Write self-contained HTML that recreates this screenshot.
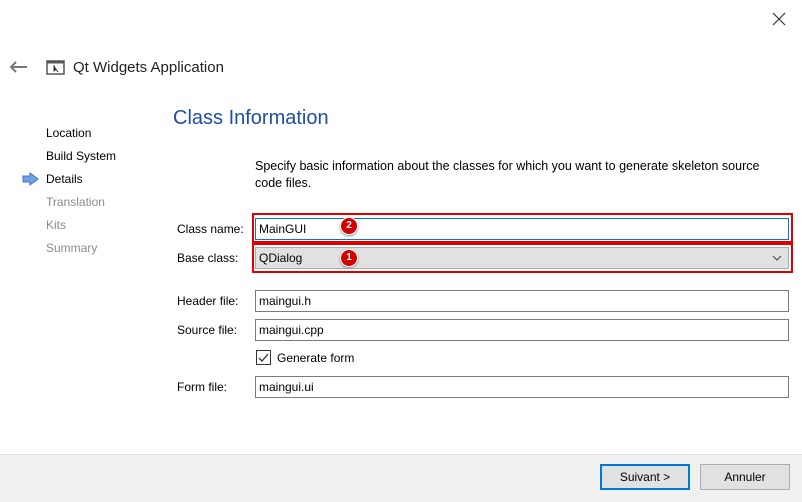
<!DOCTYPE html>
<html><head><style>
body{margin:0;width:802px;height:501px;background:#fff;position:relative;overflow:hidden;font-family:"Liberation Sans",sans-serif;font-size:12px;color:#000}
.a{position:absolute;white-space:nowrap}
.side{left:46px;font-size:12px}
.g{color:#8c8c8c}
.lbl{left:177px}
.inp{position:absolute;left:255px;width:532px;height:20px;border:1px solid #7a7a7a;background:#fff;box-sizing:content-box}
.inp span{position:absolute;left:3px;top:3px}
.red{position:absolute;border:2px solid #e00000}
.badge{position:absolute;width:16px;height:16px;border-radius:50%;background:#d40000;border:1px solid #fff;box-shadow:0 1px 2px #888;color:#fff;font-weight:bold;font-size:10px;text-align:center;line-height:16px}
.btn{position:absolute;top:464px;width:88px;height:24px;border:1px solid #adadad;background:#e1e1e1;text-align:center;line-height:24px}
</style></head><body>
<svg class="a" style="left:772px;top:12px" width="14" height="14"><path d="M1 1L13 13M13 1L1 13" stroke="#333" stroke-width="1.2"/></svg>
<svg class="a" style="left:10px;top:61px" width="18" height="12"><path d="M1 6H17M6 1L1 6L6 11" stroke="#777" stroke-width="2" fill="none"/></svg>
<svg class="a" style="left:46px;top:60px" width="19" height="16"><rect x="1" y="1" width="17" height="13" fill="#fff" stroke="#555" stroke-width="1.5"/><rect x="1" y="1" width="17" height="2.5" fill="#555"/><path d="M8 5L8 11L10 9.5L12 12" stroke="#333" fill="#333"/></svg>
<div class="a" style="left:73px;top:59px;font-size:15px;color:#222">Qt Widgets Application</div>
<div class="a" style="left:173px;top:107px;font-size:20px;color:#1e4fa6">Class Information</div>
<div class="a side" style="top:126px">Location</div>
<div class="a side" style="top:149px">Build System</div>
<svg class="a" style="left:22px;top:172px" width="17" height="14"><path d="M1 4H8V1L16 7L8 13V10H1Z" fill="#6fa3e6" stroke="#3f73c0"/></svg>
<div class="a side" style="top:172px">Details</div>
<div class="a side g" style="top:195px">Translation</div>
<div class="a side g" style="top:218px">Kits</div>
<div class="a side g" style="top:241px">Summary</div>
<div class="a" style="left:255px;top:158px;line-height:17px;white-space:normal;width:528px;font-size:12.5px">Specify basic information about the classes for which you want to generate skeleton source code files.</div>
<div class="a lbl" style="top:222px">Class name:</div>
<div class="red" style="left:252px;top:213px;width:537px;height:26px"></div>
<div class="inp" style="top:218px;border-color:#0078d7"><span>MainGUI</span></div>
<div class="badge" style="left:340px;top:217px">2</div>
<div class="a lbl" style="top:251px">Base class:</div>
<div class="red" style="left:252px;top:243px;width:537px;height:26px"></div>
<div class="inp" style="top:247px;background:#e1e1e1;border-color:#adadad"><span>QDialog</span>
<svg style="position:absolute;right:6px;top:7px" width="10" height="6"><path d="M1 1L5 5L9 1" stroke="#444" fill="none"/></svg></div>
<div class="badge" style="left:340px;top:249px">1</div>
<div class="a lbl" style="top:294px">Header file:</div>
<div class="inp" style="top:290px"><span>maingui.h</span></div>
<div class="a lbl" style="top:323px">Source file:</div>
<div class="inp" style="top:319px"><span>maingui.cpp</span></div>
<div class="a" style="left:256px;top:350px;width:13px;height:13px;border:1px solid #333"></div>
<svg class="a" style="left:257px;top:351px" width="13" height="13"><path d="M2 7L5 10L11 3" stroke="#333" stroke-width="1.3" fill="none"/></svg>
<div class="a" style="left:277px;top:351px">Generate form</div>
<div class="a lbl" style="top:380px">Form file:</div>
<div class="inp" style="top:376px"><span>maingui.ui</span></div>
<div class="a" style="left:0;top:454px;width:802px;height:47px;background:#f0f0f0;border-top:1px solid #dfdfdf"></div>
<div class="btn" style="left:600px;border:2px solid #0078d7;width:86px;height:22px;line-height:22px">Suivant &gt;</div>
<div class="btn" style="left:700px">Annuler</div>
</body></html>
